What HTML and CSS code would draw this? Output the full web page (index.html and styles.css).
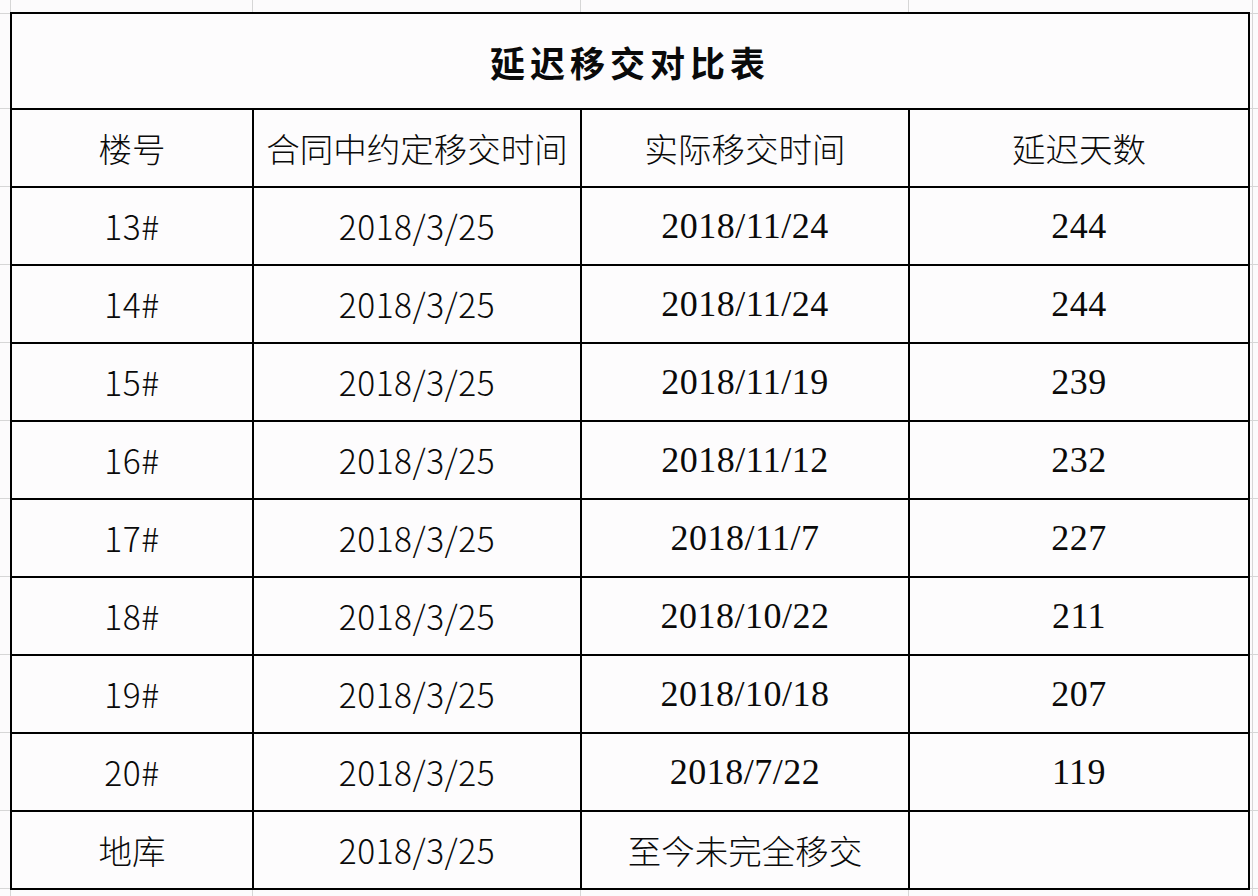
FILE: index.html
```html
<!DOCTYPE html>
<html lang="zh-CN">
<head>
<meta charset="utf-8">
<title>延迟移交对比表</title>
<link rel="stylesheet" href="styles.css">
</head>
<body>
<main class="page">
  <table class="sheet">
    <colgroup>
      <col class="col-bldg">
      <col class="col-plan">
      <col class="col-actual">
      <col class="col-delay">
    </colgroup>
    <thead>
      <tr class="title-row"><th colspan="4" class="title">延迟移交对比表</th></tr>
      <tr class="head-row">
        <th>楼号</th>
        <th>合同中约定移交时间</th>
        <th>实际移交时间</th>
        <th>延迟天数</th>
      </tr>
    </thead>
    <tbody>
      <tr><td class="sans">13#</td><td class="sans">2018/3/25</td><td class="serif">2018/11/24</td><td class="serif">244</td></tr>
      <tr><td class="sans">14#</td><td class="sans">2018/3/25</td><td class="serif">2018/11/24</td><td class="serif">244</td></tr>
      <tr><td class="sans">15#</td><td class="sans">2018/3/25</td><td class="serif">2018/11/19</td><td class="serif">239</td></tr>
      <tr><td class="sans">16#</td><td class="sans">2018/3/25</td><td class="serif">2018/11/12</td><td class="serif">232</td></tr>
      <tr><td class="sans">17#</td><td class="sans">2018/3/25</td><td class="serif">2018/11/7</td><td class="serif">227</td></tr>
      <tr><td class="sans">18#</td><td class="sans">2018/3/25</td><td class="serif">2018/10/22</td><td class="serif">211</td></tr>
      <tr><td class="sans">19#</td><td class="sans">2018/3/25</td><td class="serif">2018/10/18</td><td class="serif">207</td></tr>
      <tr><td class="sans">20#</td><td class="sans">2018/3/25</td><td class="serif">2018/7/22</td><td class="serif">119</td></tr>
      <tr><td class="cjk">地库</td><td class="sans">2018/3/25</td><td class="cjk">至今未完全移交</td><td class="serif"></td></tr>
    </tbody>
  </table>
</main>
</body>
</html>
```
FILE: styles.css
```css
html, body {
  margin: 0;
  padding: 0;
  height: 100%;
}

body {
  background-color: #fcfbfc;
  background-image:
    linear-gradient(90deg,
      transparent 10px, #d6d6d6 10px 11px,
      transparent 11px 252px, #d6d6d6 252px 253px,
      transparent 253px 580px, #d6d6d6 580px 581px,
      transparent 581px 908px, #d6d6d6 908px 909px,
      transparent 909px 1252px, #d6d6d6 1252px 1253px,
      transparent 1253px),
    linear-gradient(180deg,
      transparent 13px, #d6d6d6 13px 14px,
      transparent 14px 108px, #d6d6d6 108px 109px,
      transparent 109px 186px, #d6d6d6 186px 187px,
      transparent 187px 264px, #d6d6d6 264px 265px,
      transparent 265px 342px, #d6d6d6 342px 343px,
      transparent 343px 420px, #d6d6d6 420px 421px,
      transparent 421px 498px, #d6d6d6 498px 499px,
      transparent 499px 576px, #d6d6d6 576px 577px,
      transparent 577px 654px, #d6d6d6 654px 655px,
      transparent 655px 732px, #d6d6d6 732px 733px,
      transparent 733px 810px, #d6d6d6 810px 811px,
      transparent 811px 888px, #d6d6d6 888px 889px,
      transparent 889px);
  background-repeat: no-repeat;
  background-size: 1258px 896px;
  color: #0a0a0a;
  font-family: "Noto Sans CJK SC", "Noto Sans", sans-serif;
}

.page {
  padding: 12px 0 0 10px;
}

.sheet {
  width: 1240px;
  table-layout: fixed;
  border-collapse: separate;
  border-spacing: 0;
  border-top: 2px solid #000;
  border-left: 2px solid #000;
  background: #fdfcfd;
}

.col-bldg { width: 242px; }
.col-plan { width: 328px; }
.col-actual { width: 328px; }
.col-delay { width: 340px; }

.sheet th,
.sheet td {
  padding: 0;
  border-right: 2px solid #000;
  border-bottom: 2px solid #000;
  text-align: center;
  vertical-align: middle;
  white-space: nowrap;
  line-height: 1;
}

.title-row { height: 96px; }
.head-row,
.sheet tbody tr { height: 78px; }

.title {
  font-family: "Noto Sans CJK SC", sans-serif;
  font-weight: 700;
  font-size: 35px;
  letter-spacing: 5px;
  padding-left: 5px;
  padding-top: 4px;
}

.head-row th,
.cjk {
  font-family: "Noto Sans CJK SC", sans-serif;
  font-weight: 300;
  font-size: 33.5px;
}

.sans {
  font-family: "Noto Sans CJK SC", sans-serif;
  font-weight: 300;
  font-size: 33.5px;
  letter-spacing: 0.5px;
  padding-top: 3px;
}

.serif {
  font-family: "Liberation Serif", "Times New Roman", serif;
  font-weight: 400;
  font-size: 36px;
  letter-spacing: 0.5px;
  padding-top: 3px;
}
```
